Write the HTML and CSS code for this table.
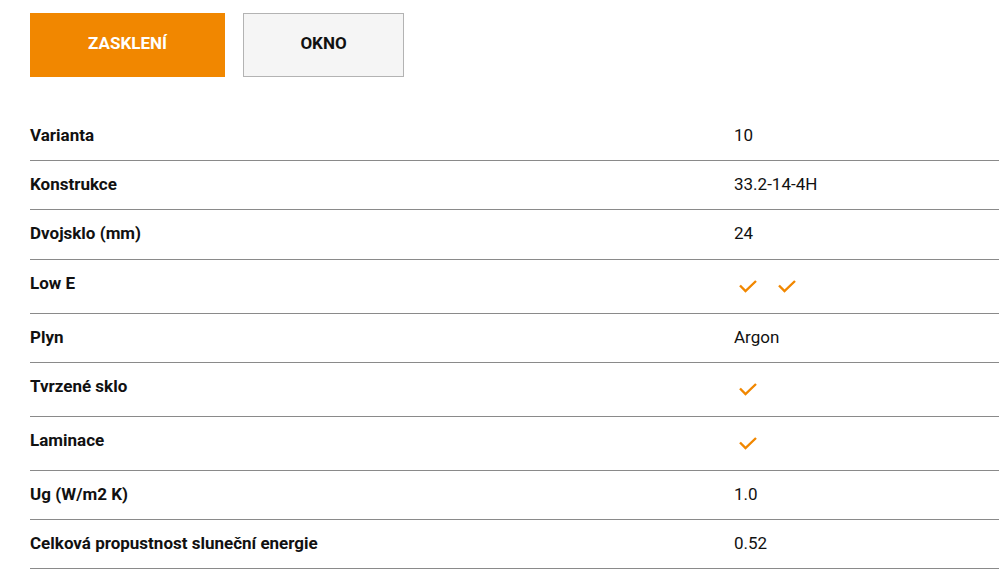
FILE: index.html
```html
<!DOCTYPE html>
<html lang="cs">
<head>
<meta charset="utf-8">
<title>Zasklení</title>
<link rel="stylesheet" href="styles.css">
</head>
<body>
<div class="page">
  <div class="tabs">
    <button class="tab tab-active">ZASKLENÍ</button>
    <button class="tab">OKNO</button>
  </div>
  <div class="spec">
    <div class="row"><div class="label">Varianta</div><div class="value">10</div></div>
    <div class="row"><div class="label">Konstrukce</div><div class="value">33.2-14-4H</div></div>
    <div class="row"><div class="label">Dvojsklo (mm)</div><div class="value">24</div></div>
    <div class="row"><div class="label">Low E</div><div class="value icons">
      <svg class="check" viewBox="0 0 18 13"><path d="M1 5.5 L6.5 11 L17 1"/></svg>
      <svg class="check" viewBox="0 0 18 13"><path d="M1 5.5 L6.5 11 L17 1"/></svg>
    </div></div>
    <div class="row"><div class="label">Plyn</div><div class="value">Argon</div></div>
    <div class="row"><div class="label">Tvrzené sklo</div><div class="value icons">
      <svg class="check" viewBox="0 0 18 13"><path d="M1 5.5 L6.5 11 L17 1"/></svg>
    </div></div>
    <div class="row"><div class="label">Laminace</div><div class="value icons">
      <svg class="check" viewBox="0 0 18 13"><path d="M1 5.5 L6.5 11 L17 1"/></svg>
    </div></div>
    <div class="row"><div class="label">Ug (W/m2 K)</div><div class="value">1.0</div></div>
    <div class="row"><div class="label">Celková propustnost sluneční energie</div><div class="value">0.52</div></div>
  </div>
</div>
</body>
</html>
```

FILE: styles.css
```css
html, body {
  margin: 0;
  padding: 0;
  background: #fff;
}
body {
  font-family: "Roboto", "Liberation Sans", sans-serif;
  color: #111;
}
.page {
  padding: 13px 0 0 30px;
}
.tabs {
  display: flex;
  gap: 18px;
}
.tab {
  font-family: inherit;
  font-weight: 700;
  font-size: 17px;
  height: 64px;
  border: 1px solid #b3b3b3;
  background: #f5f5f5;
  color: #111;
  padding: 0 0 5px;
  cursor: pointer;
  width: 161px;
}
.tab-active {
  width: 195px;
  background: #f18700;
  border-color: #f18700;
  color: #fff;
}
.spec {
  margin-top: 35px;
}
.row {
  display: flex;
  border-bottom: 1px solid #8a8a8a;
}
.label {
  width: 704px;
  font-weight: 700;
  font-size: 17px;
  line-height: 24px;
  padding: 11.1px 0 13.1px;
}
.value {
  font-size: 17px;
  line-height: 24px;
  padding: 11.1px 0 13.1px;
}
.icons {
  display: flex;
  align-items: center;
  gap: 21px;
  height: 29px;
  padding: 12px 0 12px 5px;
}
.check {
  width: 18px;
  height: 13px;
  fill: none;
  stroke: #f18700;
  stroke-width: 2.4;
}
```
